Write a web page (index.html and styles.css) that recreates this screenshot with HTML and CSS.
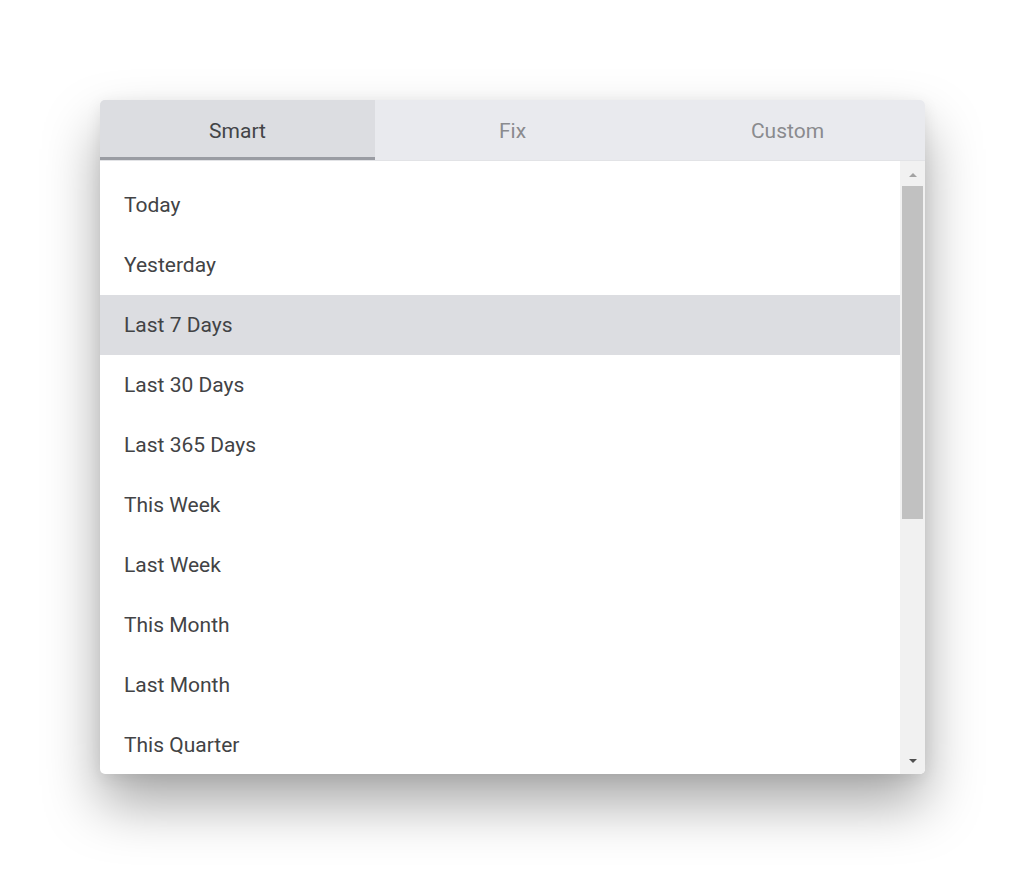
FILE: index.html
```html
<!DOCTYPE html>
<html lang="en">
<head>
  <meta charset="UTF-8">
  <title>Date Range Picker</title>
  <link rel="stylesheet" href="styles.css">
</head>
<body>

<div class="picker">
  <nav class="tabs">
    <button class="tab active">Smart</button>
    <button class="tab">Fix</button>
    <button class="tab">Custom</button>
  </nav>
  <div class="body">
    <ul class="ranges">
      <li>Today</li>
      <li>Yesterday</li>
      <li class="selected">Last 7 Days</li>
      <li>Last 30 Days</li>
      <li>Last 365 Days</li>
      <li>This Week</li>
      <li>Last Week</li>
      <li>This Month</li>
      <li>Last Month</li>
      <li>This Quarter</li>
    </ul>
    <div class="scrollbar">
      <div class="arrow up"></div>
      <div class="track">
        <div class="thumb"></div>
      </div>
      <div class="arrow down"></div>
    </div>
  </div>
</div>

</body>
</html>
```

FILE: styles.css
```css
html, body {
  margin: 0;
  background: #ffffff;
}

body {
  font-family: Roboto, "Liberation Sans", Arial, sans-serif;
  padding: 100px 0 0 100px;
  min-height: 100vh;
  box-sizing: border-box;
}

.picker {
  width: 825px;
  height: 674px;
  background: #ffffff;
  border-radius: 5px;
  overflow: hidden;
  display: flex;
  flex-direction: column;
  box-shadow: 0 30px 55px rgba(0, 0, 0, 0.34), 0 4px 16px rgba(0, 0, 0, 0.08);
}

.tabs {
  display: flex;
  background: #e9eaee;
  border-bottom: 1px solid #e2e3e6;
}

.tab {
  flex: 1;
  height: 60px;
  border: none;
  border-bottom: 3px solid transparent;
  background: transparent;
  font-family: inherit;
  font-size: 21px;
  color: #8a8b8e;
  padding: 4px 0 0;
  cursor: pointer;
}

.tab.active {
  background: #dcdde1;
  color: #434447;
  border-bottom-color: #9a9ca3;
}

.body {
  flex: 1;
  display: flex;
  min-height: 0;
}

.ranges {
  flex: 1;
  list-style: none;
  margin: 0;
  padding: 14px 0 0;
  overflow: hidden;
}

.ranges li {
  height: 60px;
  line-height: 60px;
  padding-left: 24px;
  font-size: 21px;
  color: #424345;
  cursor: pointer;
}

.ranges li.selected {
  background: #dcdde1;
}

.scrollbar {
  width: 25px;
  background: #f1f1f1;
  display: flex;
  flex-direction: column;
}

.arrow {
  height: 25px;
  display: flex;
  align-items: center;
  justify-content: center;
}

.arrow::before {
  content: "";
  border-left: 4px solid transparent;
  border-right: 4px solid transparent;
}

.arrow.up::before {
  border-bottom: 4px solid #a3a3a3;
  margin-top: 2px;
}

.arrow.down::before {
  border-top: 4px solid #505050;
  margin-bottom: 2px;
}

.track {
  flex: 1;
  padding: 0 2px;
}

.thumb {
  height: 333px;
  background: #c1c1c1;
}
```
